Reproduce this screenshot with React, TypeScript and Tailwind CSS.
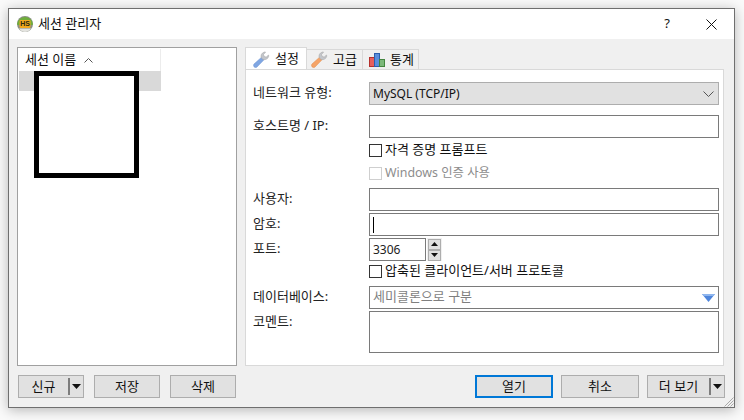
const font = "[font-family:'Noto_Sans','Noto_Sans_CJK_KR',sans-serif]";

function AppLogo() {
  return (
    <svg width="16" height="16" viewBox="0 0 16 16">
      <circle cx="8" cy="8" r="8" fill="#8a8f84" />
      <path d="M0.3 7.5a7.8 7.8 0 0 1 15.4 0v1.5H0.3z" fill="#6fae3a" />
      <path d="M2 12.5a7 7 0 0 0 12 0z" fill="#e4e4e0" />
      <rect x="2.5" y="4" width="11" height="8" rx="1" fill="#f2a91f" />
      <text x="8" y="10.4" textAnchor="middle" fontSize="7" fontWeight="700" fill="#2a2a10" fontFamily="Liberation Sans">
        HS
      </text>
    </svg>
  );
}

function Wrench({ fill, dark, head }: { fill: string; dark: string; head: string }) {
  return (
    <svg width="17" height="17" viewBox="0 0 17 17">
      <path d="M1 13 8.6 6.2l2.4 2.6-7 7.2c-.9.8-2 .7-2.8-.1s-.9-2 -.2-2.9z" fill={fill} stroke={dark} strokeWidth="0.5" />
      <path d="M8.2 6.8c-.7-2.6.4-5 3.2-5.8l1.2.1-2.1 2.4.7 2 2 .6 2.3-2.1.3 1.1c-.6 2.8-3.4 4.1-5.8 3.4z" fill={head} stroke="#a0a0a0" strokeWidth="0.5" />
    </svg>
  );
}

function Bars() {
  return (
    <svg width="16" height="16" viewBox="0 0 16 16">
      <rect x="0.5" y="5.5" width="5" height="9" fill="#e8605c" stroke="#b5302c" />
      <rect x="5.5" y="1.5" width="5" height="13" fill="#5b8fdc" stroke="#2d5fae" />
      <rect x="10.5" y="7.5" width="5" height="7" fill="#7cb87a" stroke="#44853f" />
    </svg>
  );
}

function Caret() {
  return (
    <svg width="9" height="5" viewBox="0 0 9 5" className="shrink-0">
      <path d="M0 0h9L4.5 5z" fill="#111" />
    </svg>
  );
}

function Btn({ label, split, primary, className }: { label: string; split?: boolean; primary?: boolean; className: string }) {
  return (
    <div
      className={`flex h-[23px] items-center bg-[#e1e1e1] text-[13px] text-[#111] ${
        primary ? "border-2 border-[#0078d7]" : "border border-[#adadad]"
      } ${className}`}
    >
      <span className="flex-1 text-center">{label}</span>
      {split ? (
        <div className="flex h-full items-center pr-[2px]">
          <div className="mr-[2px] h-[17px] w-[2px] bg-[#7d7d7d]" />
          <Caret />
        </div>
      ) : null}
    </div>
  );
}

function Label({ text }: { text: string }) {
  return <div className="w-[116px] shrink-0 pt-[2px] text-[13px] leading-[17px] text-[#222]">{text}</div>;
}

function Field({ h = "h-[23px]", className = "", children }: { h?: string; className?: string; children?: React.ReactNode }) {
  return (
    <div className={`flex w-[350px] items-center border border-[#7a7a7a] bg-white px-[3px] text-[12px] ${h} ${className}`}>
      {children}
    </div>
  );
}

function Check({ text, disabled, className }: { text: string; disabled?: boolean; className: string }) {
  return (
    <div className={`ml-[116px] flex h-[13px] items-center ${className}`}>
      <div className={`h-[13px] w-[13px] shrink-0 border bg-white ${disabled ? "border-[#cfcfcf]" : "border-[#333]"}`} />
      <span
        className={`ml-[3px] whitespace-nowrap pb-[2px] leading-[13px] ${
          disabled ? "text-[12.4px] text-[#8d8d8d]" : "text-[13px] text-[#111]"
        }`}
      >
        {text}
      </span>
    </div>
  );
}

function Tab({ label, icon, active, className }: { label: string; icon: React.ReactNode; active?: boolean; className?: string }) {
  return (
    <div
      className={`flex items-center border border-b-0 border-[#d9d9d9] text-[13px] text-[#111] ${
        active ? "-mb-px h-[23px] w-[62px] bg-white pl-[7px]" : "-ml-px h-[20px] w-[57px] bg-[#f0f0f0]"
      } ${className ?? ""}`}
    >
      <span className="mr-[5px] shrink-0">{icon}</span>
      {label}
    </div>
  );
}

export default function App() {
  return (
    <div className={`h-[420px] w-[744px] overflow-hidden bg-[#fafafa] pl-2 pt-2 ${font}`}>
      <div className="relative flex h-[400px] w-[727px] flex-col border border-[#6f6f6f] bg-[#f0f0f0] shadow-[0_2px_12px_rgba(0,0,0,0.28)]">
        <div className="flex h-[30px] shrink-0 items-center bg-white pl-[8px]">
          <AppLogo />
          <span className="ml-[5px] text-[13px] text-[#111]">세션 관리자</span>
          <span className="ml-auto mr-[36px] text-[13px] text-[#111]">?</span>
          <svg width="11" height="11" viewBox="0 0 11 11" className="mr-[17px]">
            <path d="M0.5 0.5l10 10M10.5 0.5l-10 10" stroke="#111" strokeWidth="1" />
          </svg>
        </div>

        <div className="flex flex-1 flex-col pl-[8px] pt-[8px]">
          <div className="flex h-[319px]">
            <div className="relative w-[220px] border border-[#a0a0a0] bg-white p-px">
              <div className="flex h-[22px] w-[142px] items-center border-r border-[#ececec] pl-[6px] text-[13px] text-[#111]">
                세션 이름
                <svg width="9" height="5" viewBox="0 0 9 5" className="ml-[8px]">
                  <path d="M0.5 4.5l4-4 4 4" fill="none" stroke="#555" />
                </svg>
              </div>
              <div className="h-[20px] w-[142px] bg-[#d9d9d9]" />
              <div className="absolute left-[16px] top-[23px] h-[107px] w-[105px] border-[5px] border-black bg-white" />
            </div>

            <div className="ml-[8px] flex w-[479px] flex-col">
              <div className="flex h-[22px] items-end">
                <Tab active label="설정" icon={<Wrench fill="#80a6e2" dark="#6a92d0" head="#c3c6cb" />} />
                <Tab label="고급" className="pl-[4px]" icon={<Wrench fill="#f5a468" dark="#e08a48" head="#c3c6cb" />} />
                <Tab label="통계" className="pl-[6px]" icon={<Bars />} />
              </div>
              <div className="flex-1 border border-[#d9d9d9] bg-white pl-[7px] pt-[12px]">
                <div className="flex">
                  <Label text="네트워크 유형:" />
                  <Field className="justify-between !border-[#adadad] !bg-[#e1e1e1]">
                    <span className="text-[#111]">MySQL (TCP/IP)</span>
                    <svg width="11" height="6" viewBox="0 0 11 6" className="mr-px">
                      <path d="M0.5 0.5l5 5 5-5" fill="none" stroke="#555" />
                    </svg>
                  </Field>
                </div>
                <div className="mt-[10px] flex">
                  <Label text="호스트명 / IP:" />
                  <Field />
                </div>
                <Check className="mt-[6px]" text="자격 증명 프롬프트" />
                <Check className="mt-[10px]" text="Windows 인증 사용" disabled />
                <div className="mt-[8px] flex">
                  <Label text="사용자:" />
                  <Field />
                </div>
                <div className="mt-[2px] flex">
                  <Label text="암호:" />
                  <Field>
                    <div className="h-[16px] w-px bg-black" />
                  </Field>
                </div>
                <div className="mt-[2px] flex">
                  <Label text="포트:" />
                  <Field className="!w-[57px]">
                    <span className="text-[#222]">3306</span>
                  </Field>
                  <div className="ml-px flex h-[23px] w-[15px] flex-col justify-center bg-[#f0f0f0] px-px">
                    <div className="flex h-[11px] items-center justify-center border border-[#adadad] bg-[#e1e1e1]">
                      <svg width="7" height="4" viewBox="0 0 7 4">
                        <path d="M0 4h7L3.5 0z" fill="#111" />
                      </svg>
                    </div>
                    <div className="flex h-[11px] items-center justify-center border border-[#adadad] bg-[#e1e1e1]">
                      <svg width="7" height="4" viewBox="0 0 7 4">
                        <path d="M0 0h7L3.5 4z" fill="#111" />
                      </svg>
                    </div>
                  </div>
                </div>
                <Check className="mt-[4px]" text="압축된 클라이언트/서버 프로토콜" />
                <div className="mt-[8px] flex">
                  <Label text="데이터베이스:" />
                  <Field className="justify-between">
                    <span className="pb-[2px] text-[13px] text-[#7f7f7f]">세미콜론으로 구분</span>
                    <svg width="13" height="8" viewBox="0 0 13 8">
                      <path d="M0 0h13L6.5 8z" fill="#4f86dc" />
                      <path d="M0 0h13L11.5 2H1.5z" fill="#8fb6ee" />
                    </svg>
                  </Field>
                </div>
                <div className="mt-[2px] flex">
                  <Label text="코멘트:" />
                  <Field h="h-[42px]" />
                </div>
              </div>
            </div>
          </div>

          <div className="ml-px mt-[9px] flex">
            <Btn label="신규" split className="w-[66px]" />
            <Btn label="저장" className="ml-[10px] w-[66px]" />
            <Btn label="삭제" className="ml-[10px] w-[66px]" />
            <Btn label="열기" primary className="ml-[239px] w-[78px]" />
            <Btn label="취소" className="ml-[8px] w-[78px]" />
            <Btn label="더 보기" split className="ml-[8px] w-[78px]" />
          </div>
        </div>

        <svg width="11" height="11" viewBox="0 0 11 11" className="absolute bottom-0 right-0">
          <path d="M10.5 1.5l-9 9M10.5 4.5l-6 6M10.5 7.5l-3 3" stroke="#a8a8a8" />
        </svg>
      </div>
    </div>
  );
}
